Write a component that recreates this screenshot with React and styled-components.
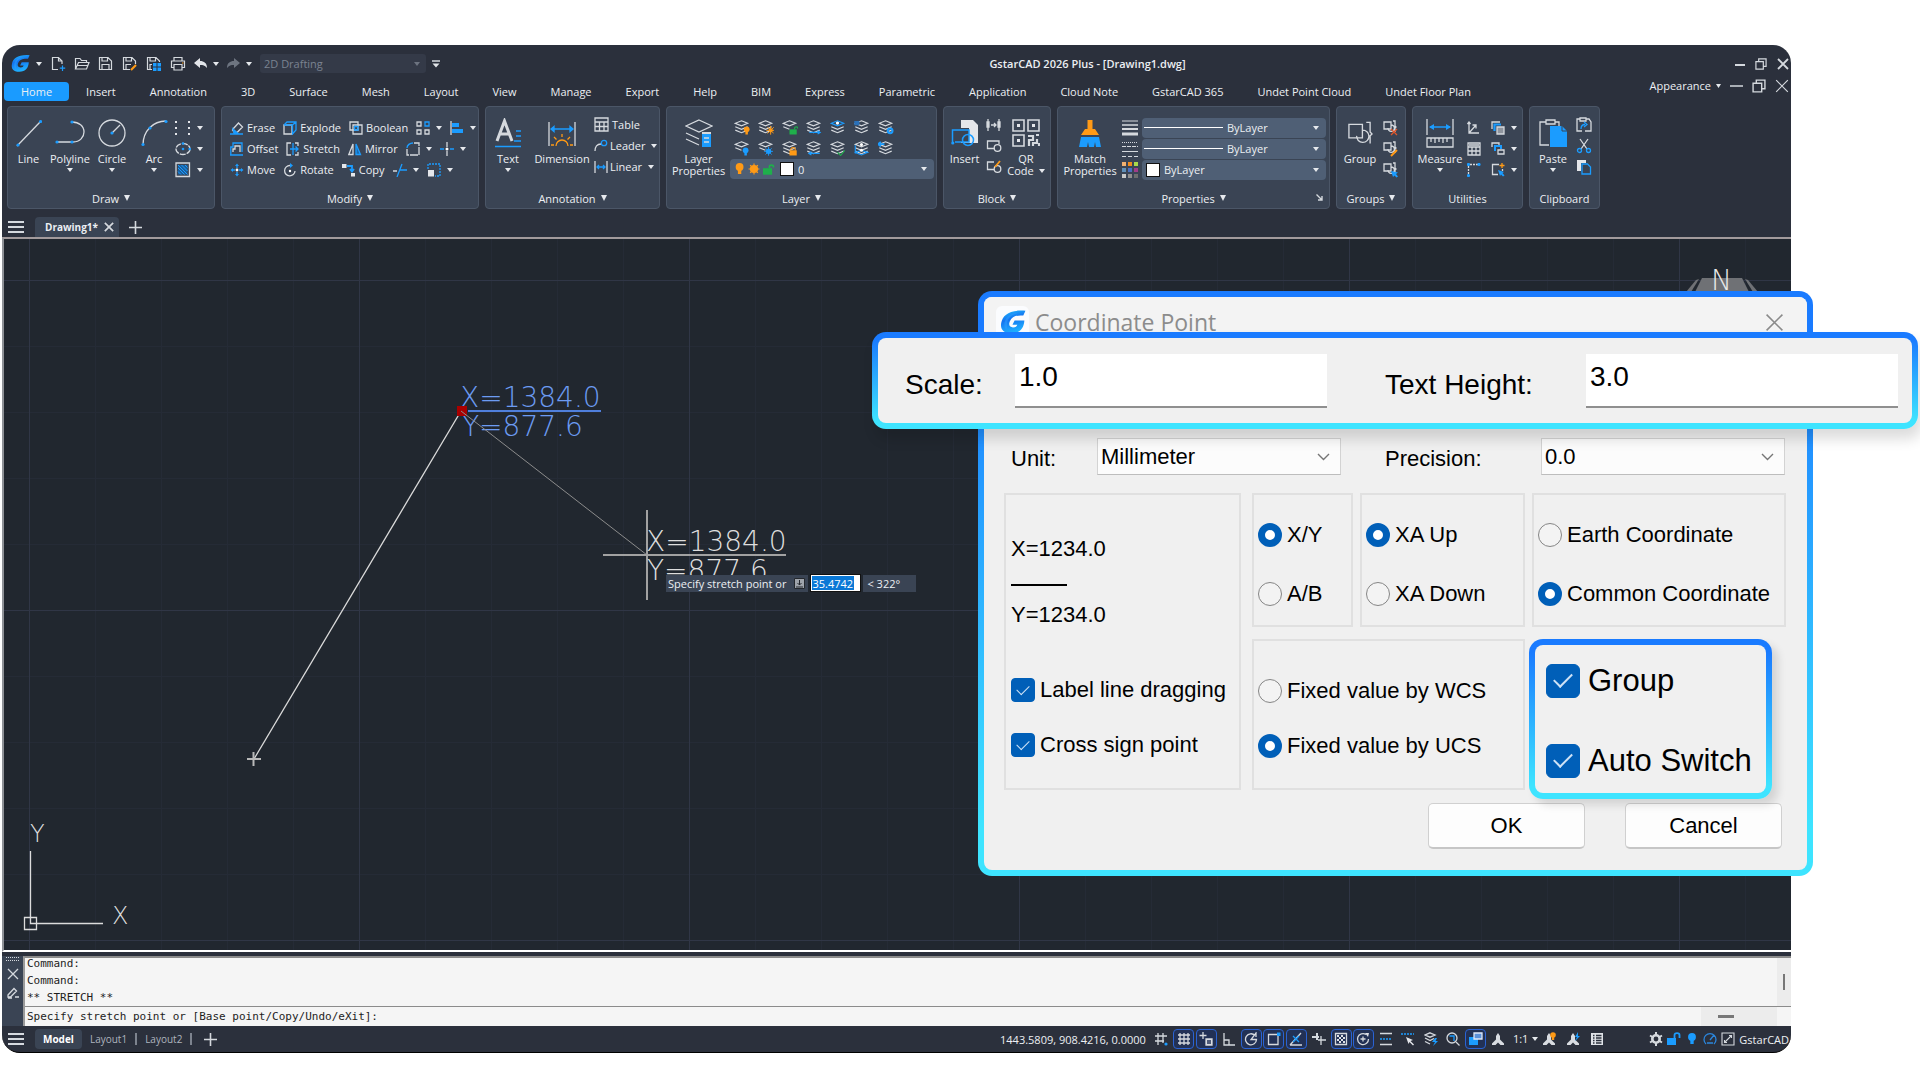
import React, { useState } from "react";
import styled, { createGlobalStyle } from "styled-components";

const Colours = {
  chrome: "#2b303c",
  panel: "#3a4454",
  panel_border: "#4b5667",
  field: "#4f5f75",
  canvas: "#21272f",
  text: "#eceff3",
  line: "#d5d9de",
  blue: "#1b9cff",
  orange: "#ff9a16",
  green: "#1faf4b",
  accent: "#005fb8"
};

const uiFont = `"Open Sans", "Noto Sans", sans-serif`;
const dialogFont = `"Liberation Sans", Arial, sans-serif`;
const cadFont = `"DejaVu Sans Light", "DejaVu Sans", sans-serif`;

const GlobalStyle = createGlobalStyle`
  * {
    box-sizing: border-box;
  }
  body {
    margin: 0;
    background: #fff;
    overflow: hidden;
  }
  button, input, select {
    font: inherit;
    color: inherit;
    margin: 0;
  }
`;

/* ---------- shell ---------- */

const Page = styled.div`
  position: relative;
  height: 100vh;
  padding: 45px 129px 27px 2px;
  font-family: ${uiFont};
  font-size: 11px;
  color: ${Colours.text};
`;

const AppWindow = styled.main`
  display: flex;
  flex-direction: column;
  height: 100%;
  overflow: hidden;
  background: ${Colours.chrome};
  border-radius: 18px;
  border-bottom: 1px solid #000;
`;

const Row = styled.div`
  display: flex;
  align-items: center;
  gap: ${props => props.$gap || 0}px;
`;

const TitleBar = styled.header`
  display: flex;
  align-items: center;
  justify-content: space-between;
  flex: none;
  height: 37px;
  padding: 0 2px 0 9px;
`;

const AppTitle = styled.h1`
  margin: 0;
  font-size: 11px;
  font-weight: 600;
`;

const PlainButton = styled.button`
  display: flex;
  align-items: center;
  gap: ${props => props.$gap || 0}px;
  padding: 0;
  border: 0;
  background: none;
  line-height: 12px;
  white-space: nowrap;
`;

const WorkspaceBox = styled.div`
  display: flex;
  align-items: center;
  width: 166px;
  height: 19px;
  padding: 0 6px 0 4px;
  border-radius: 3px;
  background: #343a48;
  color: #7b8391;
`;

const BareSelect = styled.select`
  flex: 1;
  min-width: 0;
  padding: 0;
  border: 0;
  background: transparent;
  appearance: none;
  outline: none;
`;

const TabRow = styled.nav`
  display: flex;
  align-items: flex-start;
  justify-content: space-between;
  flex: none;
  height: 24px;
  padding: 0 2px 0 2px;
`;

const RibbonTab = styled.button`
  height: 19px;
  padding: 0 17px;
  border: 0;
  border-radius: 4px;
  background: ${props => (props.$active ? "#1a9bff" : "none")};
  line-height: 18px;
  white-space: nowrap;
`;

const AppearanceBar = styled.div`
  display: flex;
  align-items: center;
  gap: 9px;
  height: 18px;
  margin-top: -5px;
`;

const Ribbon = styled.section`
  display: flex;
  flex: none;
  gap: 6px;
  padding: 0 5px;
`;

const Panel = styled.div`
  display: flex;
  flex-direction: column;
  justify-content: space-between;
  width: ${props => props.$width}px;
  height: 103px;
  padding: 10px 0 1px;
  border: 1px solid ${Colours.panel_border};
  border-radius: 4px;
  background: ${Colours.panel};
`;

const PanelBody = styled.div`
  display: flex;
  align-items: flex-start;
  gap: ${props => props.$gap || 0}px;
  padding-left: ${props => props.$inset || 0}px;
`;

const PanelFooter = styled.div`
  display: flex;
  align-items: center;
  justify-content: center;
  gap: 5px;
  height: 18px;
  position: relative;
`;

const Launcher = styled.span`
  position: absolute;
  right: 6px;
  top: 5px;
  display: flex;
`;

const BigToolButton = styled.button`
  display: flex;
  flex-direction: column;
  align-items: center;
  width: ${props => props.$width}px;
  padding: 0;
  border: 0;
  background: none;
  line-height: 12px;
`;

const BigIcon = styled.span`
  display: flex;
  align-items: center;
  justify-content: center;
  height: 32px;
  margin-bottom: 4px;
`;

const CaretSlot = styled.span`
  display: flex;
  margin-top: 3px;
`;

const Stack = styled.div`
  display: flex;
  flex-direction: column;
  margin-top: ${props => (props.$raised ? "-3px" : "0")};
`;

const StackRow = styled.div`
  display: flex;
  align-items: center;
  gap: ${props => props.$gap || 0}px;
  height: 21px;
`;

const LayerIcons = styled.div`
  display: grid;
  grid-template-columns: repeat(7, 24px);
  grid-auto-rows: 21px;
  align-items: center;
  justify-items: center;
`;

const FieldBox = styled.div`
  display: flex;
  align-items: center;
  gap: 4px;
  width: ${props => props.$width}px;
  height: 20px;
  padding: 0 7px 0 ${props => props.$inset || 2}px;
  border-radius: 4px;
  background: ${Colours.field};
`;

const Swatch = styled.span`
  width: 14px;
  height: 14px;
  border: 1px solid #111;
  background: #fff;
`;

const SampleLine = styled.span`
  width: 79px;
  height: 1px;
  background: #fff;
`;

const DocTabs = styled.div`
  display: flex;
  align-items: flex-end;
  flex: none;
  height: 28px;
  padding-left: 6px;
`;

const TabIconButton = styled(PlainButton)`
  justify-content: center;
  height: 20px;
`;

const DocTab = styled.div`
  display: flex;
  align-items: center;
  gap: 6px;
  height: 20px;
  margin: 0 10px 0 11px;
  padding: 0 5px 0 10px;
  border-radius: 4px 4px 0 0;
  background: ${Colours.panel};
  font-size: 10px;
  font-weight: 700;
  line-height: 20px;
`;

/* ---------- canvas ---------- */

const Canvas = styled.section`
  position: relative;
  flex: 1;
  min-height: 0;
  overflow: hidden;
  background: ${Colours.canvas};
  border-top: 2px solid #a29a9c;
  border-left: 2px solid #8f9297;
  border-bottom: 2px solid #fff;
`;

const Drawing = styled.svg`
  position: absolute;
  left: 0;
  top: 0;
  width: 100%;
  height: 100%;
  text {
    font-family: ${cadFont};
    font-weight: 200;
  }
`;

const DynamicPrompt = styled.div`
  position: absolute;
  left: 662px;
  top: 335px;
  display: flex;
  align-items: center;
  gap: 2px;
`;

const PromptBox = styled.label`
  display: flex;
  align-items: center;
  gap: 8px;
  height: 17px;
  padding: 0 3px 0 2px;
  background: ${Colours.panel};
`;

const PromptInput = styled.input`
  width: 51px;
  height: 18px;
  padding: 0 1px;
  border: 1px solid #111;
  background: linear-gradient(#0a78d6, #0a78d6) no-repeat 1px 1px / 42px 14px #fff;
  color: #fff;
`;

const PromptAngle = styled.output`
  width: 53px;
  height: 17px;
  padding-left: 4px;
  background: ${Colours.panel};
  line-height: 17px;
`;

/* ---------- command line ---------- */

const CommandArea = styled.section`
  display: flex;
  flex: none;
  padding-top: 4px;
`;

const CommandHandle = styled.div`
  display: flex;
  flex-direction: column;
  align-items: center;
  gap: 7px;
  width: 21px;
  padding-top: 1px;
  background: ${Colours.panel};
`;

const CommandBody = styled.div`
  flex: 1;
  border-left: 2px solid #9a9a9a;
  border-top: 2px solid #8b8b8b;
  background: #f5f5f5;
  color: #1d1d1d;
  font-family: "DejaVu Sans Mono", "Liberation Mono", monospace;
`;

const CommandHistory = styled.div`
  display: flex;
  justify-content: space-between;
  height: 49px;
  border-bottom: 1px solid #8b8b8b;
`;

const HistoryLines = styled.pre`
  margin: -3px 0 0 2px;
  font: inherit;
  line-height: 17px;
`;

const ScrollTrack = styled.div`
  display: flex;
  align-items: center;
  justify-content: center;
  width: 14px;
  background: #ececec;
`;

const HorizontalTrack = styled(ScrollTrack)`
  justify-content: flex-start;
  width: 76px;
  height: 19px;
  margin-right: 14px;
  padding-left: 17px;
`;

const ScrollThumb = styled.span`
  width: ${props => (props.$wide ? 16 : 2)}px;
  height: ${props => (props.$wide ? 3 : 16)}px;
  background: #777;
`;

const CommandPrompt = styled.label`
  display: flex;
  align-items: center;
  height: 19px;
  padding-left: 2px;
`;

const CommandInput = styled.input`
  flex: 1;
  border: 0;
  background: transparent;
  outline: none;
`;

/* ---------- status bar ---------- */

const StatusBar = styled.footer`
  display: flex;
  align-items: center;
  justify-content: space-between;
  flex: none;
  height: 26px;
  padding: 0 2px 0 6px;
`;

const LayoutTab = styled.button`
  height: 20px;
  padding: 0 8px;
  border: 0;
  border-radius: 4px;
  background: ${props => (props.$active ? Colours.panel : "none")};
  color: ${props => (props.$active ? "#fff" : "#aeb4be")};
  font-size: 10px;
  font-weight: ${props => (props.$active ? 700 : 400)};
  line-height: 18px;
`;

const Divider = styled.span`
  width: 2px;
  height: 12px;
  background: #7d838e;
`;

const StatusRight = styled.div`
  display: flex;
  align-items: center;
`;

const Toggles = styled.div`
  display: flex;
  align-items: center;
  justify-content: space-between;
  width: 358px;
  margin: 0 4px 0 5px;
`;

const Toggle = styled.button`
  display: flex;
  align-items: center;
  justify-content: center;
  width: 21px;
  height: 20px;
  padding: 0;
  border: 1px solid ${props => (props.$on ? "#2a63d4" : "transparent")};
  border-radius: 4px;
  background: ${props => (props.$on ? "#223155" : "none")};
`;

const StatusGroup = styled.div`
  display: flex;
  align-items: center;
  gap: ${props => props.$gap || 3}px;
  margin-left: ${props => props.$space || 0}px;
`;

/* ---------- dialog ---------- */

const GlowFrame = styled.div`
  border: 6px solid transparent;
  border-radius: 14px;
  background: linear-gradient(#f0f0f0, #f0f0f0) padding-box,
    linear-gradient(#1a7bff 8%, #3ee4ff 92%) border-box;
`;

const Dialog = styled(GlowFrame).attrs({ as: "form" })`
  position: absolute;
  left: 978px;
  top: 291px;
  width: 835px;
  padding-bottom: 21px;
  color: #000;
  font-family: ${dialogFont};
  font-size: 22px;
`;

const DialogTitle = styled.div`
  display: flex;
  align-items: center;
  gap: 6px;
  height: 50px;
  padding: 0 23px 0 12px;
  border-radius: 8px 8px 0 0;
  background: #f3f3f3;
  color: #8c8c8c;
  font-family: ${uiFont};
  font-size: 23px;
`;

const LogoTile = styled.span`
  display: flex;
  align-items: center;
  justify-content: center;
  width: 33px;
  height: 33px;
  border-radius: 6px;
  background: #fbfcfe;
`;

const CloseButton = styled(PlainButton)`
  margin-left: auto;
`;

const DialogBody = styled.div`
  padding: 91px 21px 0 20px;
`;

const FieldGrid = styled.div`
  display: grid;
  grid-template-columns: 86px 244px 200px 244px;
  align-items: center;
  padding-left: 7px;
  margin-bottom: 18px;
`;

const FieldLabel = styled.label`
  padding-left: ${props => (props.$indent ? 44 : 0)}px;
  padding-top: 4px;
`;

const ComboBox = styled.div`
  display: flex;
  align-items: center;
  height: 37px;
  padding: 0 10px 0 3px;
  border: 1px solid #d3d3d3;
  border-bottom-color: #bdbdbd;
  background: #fcfcfc;
`;

const OptionGrid = styled.div`
  display: flex;
  gap: 11px;
`;

const OptionColumn = styled.div`
  display: flex;
  flex-direction: column;
  flex: 1;
  gap: 12px;
`;

const OptionRow = styled.div`
  position: relative;
  display: flex;
  gap: 7px;
`;

const GroupBox = styled.fieldset`
  display: flex;
  flex-direction: column;
  gap: ${props => props.$gap || 35}px;
  width: ${props => props.$width}px;
  min-width: 0;
  height: ${props => props.$height}px;
  margin: 0;
  padding: ${props => props.$top || 28}px 0 0 ${props => props.$inset || 4}px;
  border: 2px solid #e0e0e0;
`;

const Option = styled.label`
  display: flex;
  align-items: center;
  gap: ${props => (props.$large ? 8 : 5)}px;
  line-height: 24px;
  white-space: nowrap;
  font-size: ${props => (props.$large ? 31 : 22)}px;
`;

const Radio = styled.input.attrs({ type: "radio" })`
  flex: none;
  width: 24px;
  height: 24px;
  border: 1px solid #858585;
  border-radius: 50%;
  background: #f3f3f3;
  appearance: none;
  &:checked {
    border: 7px solid ${Colours.accent};
    background: #fff;
  }
`;

const CheckBox = styled.input.attrs({ type: "checkbox" })`
  display: flex;
  align-items: center;
  justify-content: center;
  flex: none;
  width: ${props => (props.$large ? 34 : 24)}px;
  height: ${props => (props.$large ? 34 : 24)}px;
  border: 1px solid #858585;
  border-radius: ${props => (props.$large ? 6 : 4)}px;
  background: #fff;
  appearance: none;
  &:checked {
    border-color: ${Colours.accent};
    background: ${Colours.accent};
  }
  &:checked::after {
    content: "";
    width: ${props => (props.$large ? 16 : 11)}px;
    height: ${props => (props.$large ? 8 : 6)}px;
    margin-bottom: ${props => (props.$large ? 6 : 4)}px;
    border: solid #cfe3f6;
    border-width: 0 0 ${props => (props.$large ? 2 : 1)}px ${props => (props.$large ? 2 : 1)}px;
    transform: rotate(-45deg);
  }
`;

const Preview = styled.div`
  display: flex;
  flex-direction: column;
  margin-bottom: 20px;
  line-height: 24px;
`;

const PreviewRule = styled.span`
  width: 56px;
  height: 2px;
  margin: 23px 0 17px;
  background: #000;
`;

const SwitchCallout = styled(GlowFrame)`
  position: absolute;
  right: 14px;
  top: 0;
  display: flex;
  flex-direction: column;
  gap: 46px;
  width: 243px;
  height: 160px;
  padding: 19px 0 0 11px;
  box-shadow: 6px 6px 8px rgba(0, 0, 0, 0.12);
  label {
    height: 34px;
  }
`;

const ScaleCallout = styled(GlowFrame)`
  position: absolute;
  left: -112px;
  top: 35px;
  display: grid;
  grid-template-columns: 110px 312px 259px 312px;
  align-items: center;
  height: 97px;
  width: 1046px;
  padding-left: 27px;
  box-shadow: 4px 10px 14px rgba(0, 0, 0, 0.14);
  font-size: 28px;
`;

const ScaleLabel = styled.label`
  padding-left: ${props => (props.$indent ? 58 : 0)}px;
  padding-top: 9px;
`;

const ScaleInput = styled.input`
  height: 54px;
  min-width: 0;
  padding: 0 4px 6px;
  border: 0;
  border-bottom: 2px solid #8f8f8f;
  background: #fff;
  outline: none;
`;

const DialogActions = styled.div`
  display: flex;
  justify-content: flex-end;
  gap: 40px;
  margin-top: 13px;
  padding-right: 4px;
`;

const DialogButton = styled.button`
  width: 157px;
  height: 46px;
  border: 1px solid #d0d0d0;
  border-bottom: 2px solid #c6c6c6;
  border-radius: 5px;
  background: #fdfdfd;
`;

/* ---------- icons ---------- */

const Glyph = ({ w = 16, h = 16, vw = w, vh = h, children, stroke = Colours.line, sw = 1.3 }) => (
  <svg width={w} height={h} viewBox={`0 0 ${vw} ${vh}`} fill="none" stroke={stroke} strokeWidth={sw} aria-hidden="true">
    {children}
  </svg>
);

const Caret = ({ size = 6, color = "#e6e9ed", tall }) => (
  <svg width={size} height={tall ? 6 : 4} viewBox="0 0 6 4" preserveAspectRatio="none" aria-hidden="true">
    <path d="M0 0H6L3 4Z" fill={color} />
  </svg>
);

const Dot = ({ x, y, r = 1.6 }) => <circle cx={x} cy={y} r={r} fill={Colours.blue} stroke="none" />;

const Logo = ({ size }) => (
  <svg width={size} height={size} viewBox="0 0 24 24" aria-hidden="true">
    <defs>
      <linearGradient id="logoFill" x1="0" y1="0" x2="0.3" y2="1">
        <stop offset="0" stopColor="#22c3ff" />
        <stop offset="0.45" stopColor="#1473f0" />
        <stop offset="1" stopColor="#1fb0ff" />
      </linearGradient>
    </defs>
    <path
      fill="url(#logoFill)"
      d="M23.500 1.500L21.500 6C16 5.500 11 6.500 9 11.500C7.500 15.500 9.500 17 12 17C14.500 17 15.500 15.800 16 14.500H11.500L13.500 10.500H22.500C22 17.500 18.500 22.500 10.500 22.500C2.500 22.500 0 18 1.200 12.500C2.500 5.500 9 0.500 23.500 1.500Z"
    />
    <path fill="#2b9dff" opacity="0.55" d="M4 15C4 8 9 3.500 17 3.500C10 5 6 9 6.500 16C7 20 4 19 4 15Z" />
  </svg>
);

const Close = ({ size, sw = 1.3, color = Colours.line }) => (
  <Glyph w={size} h={size} vw={12} vh={12} sw={sw} stroke={color}>
    <path d="M1 1L11 11M11 1L1 11" />
  </Glyph>
);

const Burger = () => (
  <Glyph w={16} h={12} sw={2}>
    <path d="M0 1H16M0 6H16M0 11H16" />
  </Glyph>
);

const Plus = () => (
  <Glyph w={13} h={13} sw={1.6}>
    <path d="M6.500 0V13M0 6.500H13" />
  </Glyph>
);

const Restore = ({ size = 13 }) => (
  <Glyph w={size} h={size} vw={13} vh={13}>
    <path d="M1 4H9V12H1ZM4 4V1H12V9H9" />
  </Glyph>
);

const Chevron = () => (
  <Glyph w={13} h={8} sw={1.4} stroke="#767676">
    <path d="M1 1L6.500 6.500L12 1" />
  </Glyph>
);

const disk = "M1.500 1.500H10L13.500 5V13.500H1.500ZM4 1.500V5H9.500V1.500M4 13.500V8.500H11V13.500";

const quickIcons = {
  New: (
    <>
      <path d="M8 13.500H2.500V1.500H8.500L12 5V8M8.500 1.500V5H12" />
      <path d="M12.500 9.500V15M9.800 12.200H15.200" stroke={Colours.blue} />
    </>
  ),
  Open: <path d="M1.500 13V2.500H6L7.500 4.500H12.500V6.500M1.500 13L4.500 6.500H15L12.500 13ZM3.500 9.500H13.500" />,
  Save: <path d={disk} />,
  "Save as": (
    <>
      <path d="M8 13.500H1.500V1.500H10L13.500 5V8M4 1.500V5H9.500V1.500M4 13.500V8.500H9" />
      <path d="M9 14L14 9" stroke={Colours.orange} strokeWidth="2.200" />
    </>
  ),
  "Save all": (
    <>
      <path d="M6 13.500H1.500V1.500H10L13.500 5V6M4 1.500V5H9.500V1.500M4 13.500V8.500H6" />
      <path d="M7 7H10.500V10.500H7ZM11.500 7H15V10.500H11.500ZM7 11.500H10.500V15H7ZM11.500 11.500H15V15H11.500Z" fill={Colours.blue} stroke="none" />
    </>
  ),
  Print: (
    <>
      <path d="M4 5V1.500H12V5M4 11.500H1.500V5H14.500V11.500H12M4 8.500H12V14H4Z" />
      <path d="M12 7H13.500" stroke={Colours.orange} />
    </>
  )
};

const Sheets = ({ top = Colours.line, short }) => (
  <>
    <path d="M7 0.800L13 3.200L7 5.600L1 3.200Z" stroke={top} />
    <path d={short ? "M1 6.500L7 9" : "M1 6.500L7 9L13 6.500M1 9.800L7 12.300L13 9.800"} />
  </>
);

const Bulb = ({ color, x = 0, y = 0 }) => (
  <g transform={`translate(${x} ${y})`} fill={color} stroke="none">
    <circle cx="3" cy="3" r="2.800" />
    <path d="M1.800 5H4.200V8H1.800Z" />
  </g>
);

const Sun = ({ color, x, y, r = 2 }) => (
  <g transform={`translate(${x} ${y})`} stroke={color}>
    <circle r={r} fill={color} />
    <path d="M0 -4.200V4.200M-4.200 0H4.200M-3 -3L3 3M3 -3L-3 3" strokeWidth="0.900" />
  </g>
);

const Lock = ({ color, x, y, open }) => (
  <g transform={`translate(${x} ${y})`} stroke={color}>
    <rect y="3" width="7" height="5" fill={color} stroke="none" />
    <path d={open ? "M5 3V1.500C5 0.300 8 0.300 8 1.500V2.500" : "M1.500 3V1.500C1.500 0 5.500 0 5.500 1.500V3"} />
  </g>
);

const layerTools = [
  ["Turn on", <><Sheets /><Bulb color={Colours.orange} x={9} y={6} /></>],
  ["Thaw", <><Sheets /><Sun color={Colours.orange} x={12} y={10} r={1.500} /></>],
  ["Unlock", <><Sheets short /><Lock color={Colours.green} x={7} y={6} open /></>],
  ["Move to layer", <><Sheets /><path d="M3 12H13M11 10.500L13.500 12L11 13.500" stroke={Colours.blue} /></>],
  ["Isolate", <><Sheets top={Colours.blue} /><circle cx="7" cy="3" r="1.600" fill="#fff" stroke="none" /></>],
  ["Match", <><Sheets /><path d="M0 1H5V5H0Z" fill="#2a70b8" stroke="none" /></>],
  ["States", <><Sheets /><circle cx="11.500" cy="10.500" r="2.300" stroke={Colours.blue} strokeWidth="2" /></>],
  ["Turn off", <><Sheets short /><Bulb color={Colours.blue} x={8} y={6} /></>],
  ["Freeze", <><Sheets short /><Sun color={Colours.blue} x={10} y={10} /></>],
  ["Lock", <><Sheets /><Lock color={Colours.orange} x={7} y={6} /></>],
  ["Copy to layer", <><Sheets /><path d="M3 12H13M5 10.500L2.500 12L5 13.500" stroke={Colours.blue} /></>],
  ["Make current", <><Sheets /><path d="M7 11L10 14L14 9" stroke={Colours.green} /></>],
  ["Walk", <><Sheets /><path d="M1 4V12M1 11L7 13.500L13 11L7 9Z" stroke={Colours.blue} /><circle cx="7" cy="3.500" r="1.500" fill="#fff" stroke="none" /><circle cx="7" cy="9" r="1.500" fill="#fff" stroke="none" /></>],
  ["Previous", <><Sheets /><path d="M0 3H6M2.500 0.800L0 3L2.500 5.200" stroke={Colours.blue} strokeWidth="1.800" /></>]
];

const modifyRows = [
  [
    ["Erase", <><path d="M3 8L8.500 2L12.500 6L7 11.500H4.500L2.500 9Z" /><path d="M0 13H13M3 8L7 11.500H4Z" stroke={Colours.blue} fill={Colours.blue} /></>],
    ["Explode", <><path d="M1 4H9V13H1Z" /><path d="M1 4L4 1H13V9L9.500 13V4H1M9.500 4L13 1" stroke={Colours.blue} /></>],
    ["Boolean", <><path d="M1 1H9V9H1ZM4 4H13V13H4Z" /><path d="M5.500 5.500H9V9H5.500Z" stroke={Colours.blue} /></>],
    [null, <><path d="M1 1H5V5H1ZM1 9H5V13H1ZM9 9H13V13H9Z" /><path d="M9 1H13V5H9Z" stroke={Colours.blue} /></>, "Array"],
    [null, <><path d="M1 0V14" /><path d="M2 2H9V6H2ZM2 8H13V12H2Z" fill={Colours.blue} stroke="none" /></>, "Align"]
  ],
  [
    ["Offset", <><path d="M3 10V7H5V4H10V7H10V10" /><path d="M0.800 13V5H3V1H12V10M0 13H13" stroke={Colours.blue} /></>],
    ["Stretch", <><path d="M5 1H1V13H5M9 1H12V4M9 13H12V10" /><path d="M7 1V13M4 7H12M9.500 4.500L12 7L9.500 9.500" stroke={Colours.blue} /></>],
    ["Mirror", <><path d="M5 2V12.500H0.800Z" /><path d="M8 2V12.500H12.500Z" stroke={Colours.blue} fill="#1b6bb0" /></>],
    [null, <><path d="M1 6C1 3 4 1 7 1" stroke={Colours.blue} /><path d="M8 1H13V13H1V7" strokeDasharray="8 1" /></>, "Fillet"],
    [null, <><path d="M7 0V5M7 9V14" /><path d="M0 7H4M10 7H14" stroke={Colours.blue} /><circle cx="7" cy="7" r="1.500" fill="#fff" stroke="none" /></>, "Break"]
  ],
  [
    ["Move", <><path d="M5 3L7 0.500L9 3ZM5 11L7 13.500L9 11ZM3 5L0.500 7L3 9ZM11 5L13.500 7L11 9Z" fill={Colours.blue} stroke="none" /><path d="M7 2V5M7 9V12M2 7H5M9 7H12" stroke={Colours.blue} /><circle cx="7" cy="7" r="1.400" fill="#fff" stroke="none" /></>],
    ["Rotate", <><path d="M7 2.500A5.200 5.200 0 1 0 12 8" /><path d="M7 0L10 2.500L7 5Z" fill={Colours.blue} stroke="none" /><circle cx="7" cy="8" r="1.200" fill="#fff" stroke="none" /></>],
    ["Copy", <><path d="M0 1H4.500V5H0ZM9 10H13V13.500H9Z" fill="#e4e6ea" stroke="none" /><path d="M5 3H10V8M8 6L10 8.500L12 6" stroke={Colours.blue} strokeWidth="1.800" /></>],
    [null, <><path d="M0 8H4" /><path d="M4 14L9 1M7 7H14" stroke={Colours.blue} /></>, "Trim"],
    [null, <><path d="M1 6V1H13V13H8" stroke={Colours.blue} strokeDasharray="2 1" /><path d="M1 7H7V13.500H1Z" fill="#e4e6ea" stroke="none" /></>, "Scale"]
  ]
];

const GroupShape = () => <path d="M1 2H8V9H1ZM5 8A3.200 3.200 0 1 0 8 5M10 1H12V6L13 7L12 8V12" />;

const annotative = "M7 1L9 4V7.500L13 11.500V13H9.500L7 10.500L4.500 13H1V11.500L5 7.500V4Z";

const toggles = [
  ["Snap", false, <><path d="M4 1V13M9 1V11M1 4H13M1 9H10" /><circle cx="12" cy="12" r="1.600" fill={Colours.blue} stroke="none" /></>],
  ["Grid", true, <path d="M3 1V13M7 1V13M11 1V13M1 3H13M1 7H13M1 11H13" />],
  ["Dynamic input", true, <><path d="M4 0V7M0.500 3.500H7.500" /><path d="M7 7H13V13H7Z" fill="#dfe2e7" /><path d="M8 9H12M8 11H12" stroke="#223155" /></>],
  ["Ortho", false, <path d="M2 1V13H13M2 8H7V13" />],
  ["Polar", true, <><path d="M11 3.500A5.500 5.500 0 1 0 12.500 7.500H7L12 1V5" /></>],
  ["Object snap", true, <><path d="M1.500 2.500H11V12.500H1.500Z" /><path d="M10 0.500H13.500V4H10Z" fill={Colours.blue} stroke="none" /></>],
  ["Tracking", true, <><path d="M1 13L12 1M1 13H13" /><path d="M4 4L10 10M4 10L10 4" stroke={Colours.blue} /></>],
  ["Dynamic UCS", false, <><path d="M5 1V8M0 5H7" strokeWidth="2" /><path d="M9 4V13M6 8H14" /></>],
  ["Transparency", true, <><path d="M1.500 1.500H12.500V12.500H1.500Z" /><path d="M3 3H5V5H3ZM7 3H9V5H7ZM5 5H7V7H5ZM9 5H11V7H9ZM3 7H5V9H3ZM7 7H9V9H7ZM5 9H7V11H5ZM9 9H11V11H9Z" fill="#dfe2e7" stroke="none" /></>],
  ["Cycling", true, <><path d="M10 2.500A5.500 5.500 0 1 0 12.500 7M7 4.500V9.500M4.500 7H9.500" /><path d="M9 1L13 1L12 5Z" fill="#dfe2e7" stroke="none" /></>],
  ["Line weight", false, <><path d="M1 1.500H13M1 12.500H13" strokeWidth="1.500" /><path d="M1 7H13" stroke={Colours.blue} strokeDasharray="2 1" /></>],
  ["Selection", false, <><path d="M0 2H13" stroke={Colours.blue} strokeDasharray="2 1" /><path d="M5 5L12 8L9.500 9L13 12.500L12 13.500L8.500 10L7.500 12Z" fill="#e4e6ea" stroke="none" /></>],
  ["Layer state", false, <><path d="M6 0.800L11 3L6 5.200L1 3ZM1 6L6 8.500L10 6.500M1 9.500L6 12" /><path d="M11 6L8 10H11L9 14L14 9H11.500L13 6Z" fill={Colours.blue} stroke="none" /></>],
  ["Zoom", false, <><circle cx="6" cy="6" r="5" /><path d="M10 10L13.500 13.500" /><path d="M3.500 4H8V9" stroke={Colours.blue} /></>],
  ["Clean", true, <><path d="M0 5H9V13H0Z" fill={Colours.blue} stroke="none" /><path d="M5 1H13V7H5Z" fill="#5c91d8" stroke="#dfe8f8" /></>],
  ["Annotation", false, <path d={annotative} fill="#d9dce1" stroke="none" />]
];

const IconTool = ({ label, gap = 6, caret, children }) => (
  <PlainButton type="button" aria-label={label} title={label} $gap={gap}>
    {children}
    {caret && <Caret />}
  </PlainButton>
);

const BigTool = ({ width, icon, caret, lines, inlineCaret }) => (
  <BigToolButton type="button" $width={width}>
    <BigIcon>{icon}</BigIcon>
    <span>{lines[0]}</span>
    {lines[1] && (
      <Row as="span" $gap={5}>
        {lines[1]}
        {inlineCaret && <Caret />}
      </Row>
    )}
    {caret && (
      <CaretSlot>
        <Caret />
      </CaretSlot>
    )}
  </BigToolButton>
);

const Footer = ({ children, caret = true, launcher }) => (
  <PanelFooter>
    {children}
    {caret && <Caret tall />}
    {launcher && (
      <Launcher>
        <Glyph w={7} h={7} sw={1.4}>
          <path d="M0.500 0.500L6 6M6 2V6H2" />
        </Glyph>
      </Launcher>
    )}
  </PanelFooter>
);

/* ---------- sections ---------- */

const tabs = [
  "Home", "Insert", "Annotation", "3D", "Surface", "Mesh", "Layout", "View", "Manage", "Export",
  "Help", "BIM", "Express", "Parametric", "Application", "Cloud Note", "GstarCAD 365",
  "Undet Point Cloud", "Undet Floor Plan"
];

const Header = () => {
  const [active, setActive] = useState("Home");
  return (
    <>
      <TitleBar>
        <Row $gap={8}>
          <PlainButton type="button" aria-label="Application menu" $gap={6}>
            <Logo size={19} />
            <Caret />
          </PlainButton>
          <Row $gap={8}>
            {Object.keys(quickIcons).map(name => (
              <IconTool key={name} label={name}>
                <Glyph w={16} h={16} sw={1.2}>{quickIcons[name]}</Glyph>
              </IconTool>
            ))}
            <IconTool label="Undo" caret>
              <Glyph w={13} h={11} stroke="none">
                <path d="M6 0V3C10 3 13 5 13 10C11 7.500 9 7 6 7V10L0 5Z" fill="#e2e5e9" />
              </Glyph>
            </IconTool>
            <IconTool label="Redo" caret>
              <Glyph w={13} h={11} stroke="none">
                <path d="M7 0V3C3 3 0 5 0 10C2 7.500 4 7 7 7V10L13 5Z" fill="#6d7480" />
              </Glyph>
            </IconTool>
          </Row>
          <Row $gap={6}>
            <WorkspaceBox>
              <BareSelect aria-label="Workspace">
                <option>2D Drafting</option>
              </BareSelect>
              <Caret color="#6d7480" />
            </WorkspaceBox>
            <IconTool label="Customize">
              <Glyph w={8} h={8} sw={1.4}>
                <path d="M0 1H8" />
                <path d="M0.500 3.500H7.500L4 7.500Z" fill="#e2e5e9" stroke="none" />
              </Glyph>
            </IconTool>
          </Row>
        </Row>
        <AppTitle>GstarCAD 2026 Plus - [Drawing1.dwg]</AppTitle>
        <Row $gap={10}>
          <IconTool label="Minimize">
            <Glyph w={10} h={8} sw={2}><path d="M0 5H10" /></Glyph>
          </IconTool>
          <IconTool label="Restore"><Restore size={12} /></IconTool>
          <IconTool label="Close"><Close size={12} sw={1.8} /></IconTool>
        </Row>
      </TitleBar>
      <TabRow>
        <Row>
          {tabs.map(tab => (
            <RibbonTab key={tab} type="button" $active={tab === active} onClick={() => setActive(tab)}>
              {tab}
            </RibbonTab>
          ))}
        </Row>
        <AppearanceBar>
          <PlainButton type="button" $gap={5}>
            Appearance
            <Caret size={5} />
          </PlainButton>
          <IconTool label="Minimize drawing">
            <Glyph w={13} h={8}><path d="M0 4H13" /></Glyph>
          </IconTool>
          <IconTool label="Restore drawing"><Restore size={14} /></IconTool>
          <IconTool label="Close drawing"><Close size={14} sw={1} /></IconTool>
        </AppearanceBar>
      </TabRow>
    </>
  );
};

const DrawPanel = () => (
  <Panel $width={208}>
    <PanelBody>
      <BigTool width={41} lines={["Line"]} icon={<Glyph w={26} h={28}><path d="M1 27L25 2" /><Dot x={2} y={26} /><Dot x={24.500} y={2.500} /></Glyph>} />
      <BigTool width={42} caret lines={["Polyline"]} icon={<Glyph w={30} h={26}><path d="M2 22H18C25 22 29 17 29 12C29 6 24 2 17 2" /><Dot x={2} y={22} /><Dot x={17} y={22} /><Dot x={17} y={2} /></Glyph>} />
      <BigTool width={42} caret lines={["Circle"]} icon={<Glyph w={28} h={28}><circle cx="14" cy="14" r="13" /><path d="M14 14L22 6" /><Dot x={14} y={14} /></Glyph>} />
      <BigTool width={42} caret lines={["Arc"]} icon={<Glyph w={27} h={28}><path d="M2 26C2 12 12 2 25 2" /><Dot x={2} y={25.500} /><Dot x={9} y={9} /><Dot x={25} y={2.500} /></Glyph>} />
      <Stack>
        <StackRow><IconTool label="Point" caret><Glyph w={16} h={16} stroke="none"><path d="M0 1H2V3H0ZM13 1H15V3H13ZM0 7H2V9H0ZM13 7H15V9H13ZM0 13H2V15H0ZM13 13H15V15H13Z" fill="#e4e6ea" /></Glyph></IconTool></StackRow>
        <StackRow><IconTool label="Ellipse" caret><Glyph w={16} h={16}><ellipse cx="8" cy="8" rx="7" ry="5.500" strokeDasharray="6 1" /><Dot x={8} y={8} r={1.300} /><Dot x={8} y={2.500} r={1.300} /><Dot x={14.700} y={8} r={1.300} /></Glyph></IconTool></StackRow>
        <StackRow><IconTool label="Hatch" caret><Glyph w={16} h={16}><path d="M1 1H14.500V14.500H1Z" /><path d="M3 3H12.500V12.500H3Z" fill="#1a5f9e" stroke="none" /><path d="M3 6L9.500 12.500M3 3L12.500 12.500M6.500 3L12.500 9M10 3L12.500 5.500M3 9.500L6 12.500" stroke={Colours.blue} strokeWidth="1" /></Glyph></IconTool></StackRow>
      </Stack>
    </PanelBody>
    <Footer>Draw</Footer>
  </Panel>
);

const ModifyPanel = () => (
  <Panel $width={258}>
    <PanelBody $inset={8}>
      <Stack>
        {modifyRows.map((row, i) => (
          <StackRow key={i} $gap={8}>
            {row.map(([text, icon, label]) =>
              text ? (
                <PlainButton key={text} type="button" $gap={3}>
                  <Glyph w={14} h={14}>{icon}</Glyph>
                  {text}
                </PlainButton>
              ) : (
                <IconTool key={label} label={label} caret>
                  <Glyph w={14} h={14}>{icon}</Glyph>
                </IconTool>
              )
            )}
          </StackRow>
        ))}
      </Stack>
    </PanelBody>
    <Footer>Modify</Footer>
  </Panel>
);

const AnnotationPanel = () => (
  <Panel $width={175}>
    <PanelBody $gap={6}>
      <BigTool
        width={44}
        caret
        lines={["Text"]}
        icon={
          <Glyph w={28} h={30}>
            <path d="M3 23L10.500 3L18 23M6 16H15" strokeWidth="3" />
            <path d="M22 13H27M22 18H27M20 23H27M1 28.500H27" stroke={Colours.blue} />
          </Glyph>
        }
      />
      <BigTool
        width={52}
        lines={["Dimension"]}
        icon={
          <Glyph w={28} h={28}>
            <path d="M1 3V27M27 3V27" />
            <path d="M3 10H25M6 7.500L3 10L6 12.500ZM22 7.500L25 10L22 12.500Z" stroke={Colours.blue} fill={Colours.blue} />
            <path d="M8 27A6 6 0 0 1 20 27M3 26H6M22 26H25M6 18L8.500 20.500M22 18L19.500 20.500M14 15V18" stroke={Colours.orange} />
          </Glyph>
        }
      />
      <Stack $raised>
        <StackRow>
          <PlainButton type="button" $gap={3}>
            <Glyph w={15} h={15}><path d="M1 1H14V14H1ZM1 5H14M1 9.500H14M5.500 5V14M10 5V14" /></Glyph>
            Table
          </PlainButton>
        </StackRow>
        <StackRow $gap={6}>
          <PlainButton type="button" $gap={2}>
            <Glyph w={14} h={13}><path d="M1 12C1 8 3 5 7 5" /><circle cx="10" cy="4" r="2.700" stroke={Colours.blue} /></Glyph>
            Leader
          </PlainButton>
          <Caret />
        </StackRow>
        <StackRow $gap={6}>
          <PlainButton type="button" $gap={2}>
            <Glyph w={14} h={12}><path d="M1 0V12M13 0V12" /><path d="M3 6H11M5 4L3 6L5 8M9 4L11 6L9 8" stroke={Colours.blue} /></Glyph>
            Linear
          </PlainButton>
          <Caret />
        </StackRow>
      </Stack>
    </PanelBody>
    <Footer>Annotation</Footer>
  </Panel>
);

const LayerPanel = () => (
  <Panel $width={271}>
    <PanelBody>
      <BigTool
        width={63}
        lines={["Layer", "Properties"]}
        icon={
          <Glyph w={28} h={30}>
            <path d="M14 2L27 8L14 14L1 8ZM1 15L14 21M1 21L14 27" />
            <path d="M17 16H26V29H17Z" fill={Colours.blue} stroke="none" />
            <path d="M17 15H26" strokeWidth="2" />
            <path d="M19 20H24M19 24H24" />
          </Glyph>
        }
      />
      <Stack>
        <LayerIcons>
          {layerTools.map(([name, icon]) => (
            <IconTool key={name} label={name}>
              <Glyph w={16} h={15} vw={15} vh={14.500} sw={1.100}>{icon}</Glyph>
            </IconTool>
          ))}
        </LayerIcons>
        <FieldBox $width={204} $inset={4}>
          <Glyph w={42} h={14} stroke="none">
            <g transform="scale(1.400)"><Bulb color={Colours.orange} x={1} y={0.500} /></g>
            <g transform="translate(20 7) scale(1.300)"><Sun color={Colours.orange} x={0} y={0} r={2.500} /></g>
            <g transform="translate(29 1) scale(1.300)"><Lock color={Colours.green} x={0} y={1} open /></g>
          </Glyph>
          <Swatch />
          <BareSelect aria-label="Current layer"><option>0</option></BareSelect>
          <Caret />
        </FieldBox>
      </Stack>
    </PanelBody>
    <Footer>Layer</Footer>
  </Panel>
);

const BlockPanel = () => (
  <Panel $width={108}>
    <PanelBody $gap={1}>
      <BigTool
        width={41}
        lines={["Insert"]}
        icon={
          <Glyph w={28} h={28}>
            <path d="M10 1H22L27 6V24H10Z" fill="#e4e6ea" stroke="none" />
            <path d="M9 9H18V23H9Z" fill={Colours.panel} stroke="none" />
            <path d="M1.500 23V11H18V23H4" stroke={Colours.blue} strokeWidth="1.500" />
            <circle cx="17" cy="21" r="5.500" stroke={Colours.blue} strokeWidth="1.500" />
            <Dot x={1.800} y={24} />
          </Glyph>
        }
      />
      <Stack $raised>
        <StackRow><IconTool label="Attributes"><Glyph w={16} h={14}><path d="M2 1V13M1 4H3V9H1ZM13 1V13M12 4H14V9H12ZM5 7H10M8 5L10 7L8 9" /></Glyph></IconTool></StackRow>
        <StackRow><IconTool label="Create block"><Glyph w={16} h={14}><path d="M9 9.500H1.500V2H13V5" /><circle cx="11.500" cy="9" r="3.300" /></Glyph></IconTool></StackRow>
        <StackRow><IconTool label="Edit block"><Glyph w={16} h={14}><path d="M8 9.500H1.500V2H8" /><circle cx="11.500" cy="9" r="3.300" /><path d="M9 7L14 1" stroke={Colours.orange} strokeWidth="1.800" /></Glyph></IconTool></StackRow>
      </Stack>
      <BigTool
        width={46}
        inlineCaret
        lines={["QR", "Code"]}
        icon={
          <Glyph w={28} h={28} sw={1.600}>
            <path d="M1 1H12V12H1ZM16 1H27V12H16ZM1 16H12V27H1Z" />
            <path d="M5 5H8V8H5ZM20 5H23V8H20ZM5 20H8V23H5Z" fill="#e4e6ea" stroke="none" />
            <path d="M16 17H21V21H17V27M21 27V24H25V20M24 16H27M27 24V27" strokeWidth="2.200" />
          </Glyph>
        }
      />
    </PanelBody>
    <Footer>Block</Footer>
  </Panel>
);

const palette = ["#f0b070", "#f08a1c", "#a8d84a", "#5f8fb8", "#4a6fc0", "#a03c88", "#c8c8c8", "#8f8f8f", "#6e6e6e"];

const PropertiesPanel = () => (
  <Panel $width={273}>
    <PanelBody>
      <BigTool
        width={64}
        lines={["Match", "Properties"]}
        icon={
          <Glyph w={24} h={28} stroke="none">
            <path d="M9.500 1H14.500V10H17L21 16H3L7 10H9.500Z" fill={Colours.orange} />
            <path d="M3 18H21L23 28H18L17 23L16 28H11L10 23L9 28H1Z" fill={Colours.blue} />
          </Glyph>
        }
      />
      <Stack>
        <StackRow $gap={4}>
          <Glyph w={16} h={16}><path d="M0 1H16" strokeWidth="1" /><path d="M0 5H16" strokeWidth="1.500" /><path d="M0 9H16" strokeWidth="2" /><path d="M0 14H16" strokeWidth="3" /></Glyph>
          <FieldBox $width={184}>
            <SampleLine />
            <BareSelect aria-label="Line weight"><option>ByLayer</option></BareSelect>
            <Caret />
          </FieldBox>
        </StackRow>
        <StackRow $gap={4}>
          <Glyph w={16} h={16} sw={1}><path d="M0 1.500H16" strokeDasharray="1 1" /><path d="M0 5.500H16" strokeDasharray="4 1" /><path d="M0 10.500H16" /><path d="M0 15.500H16" strokeDasharray="4 2" /></Glyph>
          <FieldBox $width={184}>
            <SampleLine />
            <BareSelect aria-label="Line type"><option>ByLayer</option></BareSelect>
            <Caret />
          </FieldBox>
        </StackRow>
        <StackRow $gap={4}>
          <Glyph w={16} h={16} stroke="none">
            {palette.map((fill, i) => (
              <rect key={fill} x={(i % 3) * 6} y={Math.floor(i / 3) * 6} width="4" height="4" fill={fill} />
            ))}
          </Glyph>
          <FieldBox $width={184} $inset={4}>
            <Swatch />
            <BareSelect aria-label="Colour"><option>ByLayer</option></BareSelect>
            <Caret />
          </FieldBox>
        </StackRow>
      </Stack>
    </PanelBody>
    <Footer launcher>Properties</Footer>
  </Panel>
);

const GroupsPanel = () => (
  <Panel $width={70}>
    <PanelBody>
      <BigTool width={46} lines={["Group"]} icon={<Glyph w={26} h={28} vw={13.500} vh={13} sw={0.700}><GroupShape /></Glyph>} />
      <Stack>
        <StackRow><IconTool label="Ungroup"><Glyph w={16} h={16}><GroupShape /><path d="M8 9L14 15M14 9L8 15" stroke="#e0562a" /></Glyph></IconTool></StackRow>
        <StackRow><IconTool label="Group edit"><Glyph w={16} h={16}><GroupShape /><path d="M8 15L14 9" stroke={Colours.orange} strokeWidth="2" /></Glyph></IconTool></StackRow>
        <StackRow><IconTool label="Group selection"><Glyph w={16} h={16}><GroupShape /><path d="M8 9L15 10.500L13 12L15 14.500L13.500 15.500L11.500 13.500L10 15Z" fill={Colours.blue} stroke="none" /></Glyph></IconTool></StackRow>
      </Stack>
    </PanelBody>
    <Footer>Groups</Footer>
  </Panel>
);

const UtilitiesPanel = () => (
  <Panel $width={111}>
    <PanelBody>
      <BigTool
        width={54}
        caret
        lines={["Measure"]}
        icon={
          <Glyph w={28} h={30}>
            <path d="M1 1V17M27 1V17M1 20H27V29H1ZM5 20V24M9 20V25M13 20V24M17 20V25M21 20V24" />
            <path d="M4 9H24" stroke={Colours.blue} strokeWidth="1.500" />
            <path d="M3 9L8 6V12ZM25 9L20 6V12Z" fill={Colours.blue} stroke="none" />
          </Glyph>
        }
      />
      <Stack>
        <StackRow $gap={10}>
          <IconTool label="Coordinates"><Glyph w={14} h={14}><path d="M2 1V12H12M2 12L9 4M0.500 3L2 1L3.500 3M5.500 4H9V7.500" /></Glyph></IconTool>
          <IconTool label="Bring to front" caret><Glyph w={14} h={14}><path d="M1 8V1H9" /><path d="M3.500 10V3.500H10" stroke={Colours.blue} strokeWidth="2.200" /><path d="M6 6H13V13H6Z" fill="#8f959e" /></Glyph></IconTool>
        </StackRow>
        <StackRow $gap={10}>
          <IconTool label="Calculator"><Glyph w={14} h={14}><path d="M1 1H13V13H1ZM1 5H13M1 9H13M5 5V13M9 5V13M2 3H12" /></Glyph></IconTool>
          <IconTool label="Send to back" caret><Glyph w={14} h={14}><path d="M1 5V1H8V3" /><path d="M4 9V4H10V7" stroke={Colours.blue} strokeWidth="2" /><path d="M7 8H13V12H7Z" /></Glyph></IconTool>
        </StackRow>
        <StackRow $gap={10}>
          <IconTool label="Distance"><Glyph w={14} h={14}><path d="M3 1.500H11M1.500 3V11" strokeDasharray="2 1" /><Dot x={1.500} y={1.500} /><Dot x={12} y={1.500} /><Dot x={1.500} y={12.500} /></Glyph></IconTool>
          <IconTool label="Quick select" caret><Glyph w={14} h={14}><path d="M8 1.500H1.500V11.500H7M11.500 6V8" /><path d="M11 0V5M8.500 2.500H13.500" stroke={Colours.orange} /><path d="M7 7L13 9L11.500 10L13.500 12.500L12 13.500L10 11.500L9 13Z" fill={Colours.blue} stroke="none" /></Glyph></IconTool>
        </StackRow>
      </Stack>
    </PanelBody>
    <Footer caret={false}>Utilities</Footer>
  </Panel>
);

const ClipboardPanel = () => (
  <Panel $width={71}>
    <PanelBody>
      <BigTool
        width={46}
        caret
        lines={["Paste"]}
        icon={
          <Glyph w={28} h={30}>
            <path d="M10 27H1V4H7M16 4H20V8M7 2H16V6H7Z" />
            <path d="M11 8H23L28 13V29H11Z" fill={Colours.blue} stroke="none" />
            <path d="M23 8V13H28" stroke={Colours.panel} strokeWidth="1" />
          </Glyph>
        }
      />
      <Stack $raised>
        <StackRow><IconTool label="Copy with base point"><Glyph w={16} h={16}><path d="M6 14H1V2H4M10 2H13L15 5V14H9M4 1H10V4H4Z" /><path d="M5 12C5 8 7 7.500 9 7.500M8 5L11 7.500L8 10" stroke={Colours.blue} /></Glyph></IconTool></StackRow>
        <StackRow><IconTool label="Cut"><Glyph w={16} h={16}><path d="M4 1L11 11M12 1L5 11" /><circle cx="3.500" cy="12.500" r="2" stroke={Colours.blue} /><circle cx="12.500" cy="12.500" r="2" stroke={Colours.blue} /></Glyph></IconTool></StackRow>
        <StackRow><IconTool label="Copy clip"><Glyph w={16} h={16}><path d="M1 1H10V4H5V12H1Z" fill="#e4e6ea" stroke="none" /><path d="M6 5H11.500L14.500 8V15H6Z" stroke={Colours.blue} /></Glyph></IconTool></StackRow>
      </Stack>
    </PanelBody>
    <Footer caret={false}>Clipboard</Footer>
  </Panel>
);

const CanvasArea = () => (
  <Canvas>
    <Drawing>
      <defs>
        <pattern id="minor" x="25" y="41" width="66" height="66" patternUnits="userSpaceOnUse">
          <path d="M0 0.500H66M0.500 0V66" stroke="#252b36" />
        </pattern>
        <pattern id="major" x="25" y="41" width="330" height="330" patternUnits="userSpaceOnUse">
          <path d="M0 0.500H330M0.500 0V330" stroke="#303646" />
        </pattern>
      </defs>
      <rect width="100%" height="100%" fill="url(#minor)" />
      <rect width="100%" height="100%" fill="url(#major)" />
      <g transform="translate(-4 -239)" fill="none" stroke="#dcdcdc">
        <path d="M461 411L254 759" strokeWidth="1.300" />
        <path d="M253.500 752V766M247 759H261" stroke="#b9b9b9" strokeWidth="2" />
        <path d="M468 411H601" stroke="#4f7fdc" strokeWidth="2" />
        <g fill="#6c9bf2" stroke="none" fontSize="28">
          <text x="460" y="407">X=1384.0</text>
          <text x="462" y="436">Y=877.6</text>
        </g>
        <path d="M457 406H467V416H457Z" fill="#a90000" stroke="none" />
        <path d="M461 411L647 555" stroke="#8c8c8c" />
        <path d="M603 555H786M647 510V600" stroke="#a2a2a2" strokeWidth="2" />
        <g fill="#dedede" stroke="none" fontSize="28">
          <text x="646" y="551">X=1384.0</text>
          <text x="647" y="580">Y=877.6</text>
        </g>
        <path d="M30.500 851V923.500H103M24.500 917.500H36.500V929.500H24.500Z" strokeWidth="1.300" />
        <g fill="#dedede" stroke="none" fontSize="24">
          <text x="30" y="842">Y</text>
          <text x="112" y="924">X</text>
        </g>
        <g fill="#6f7175" stroke="none">
          <path d="M1702 278H1742L1749 292H1695Z" />
          <path d="M1699 279L1691 292H1686L1696 280Z" />
          <path d="M1745 279L1753 292H1758L1748 280Z" />
        </g>
        <text x="1711" y="290" fill="#e8e8e8" stroke="none" fontSize="28">N</text>
      </g>
    </Drawing>
    <DynamicPrompt>
      <PromptBox htmlFor="stretch">
        Specify stretch point or
        <Glyph w={11} h={11} stroke="#24282e" sw={1}>
          <path d="M0.500 0.500H10.500V10.500H0.500Z" fill="#9fa4ab" />
          <path d="M5.500 2V7M3.500 5L5.500 7L7.500 5M2 9H9" />
        </Glyph>
      </PromptBox>
      <PromptInput id="stretch" defaultValue="35.4742" />
      <PromptAngle>&lt; 322°</PromptAngle>
    </DynamicPrompt>
  </Canvas>
);

const CommandLine = () => (
  <CommandArea>
    <CommandHandle>
      <Glyph w={13} h={4} sw={1}><path d="M0 0.500H13M0 3.500H13" strokeDasharray="1 1" /></Glyph>
      <IconTool label="Close command line"><Close size={12} /></IconTool>
      <IconTool label="Command options">
        <Glyph w={12} h={12}><path d="M1 8L7 1.500L9.500 4L3.500 10H1ZM1 11H5M8 10H12" /></Glyph>
      </IconTool>
    </CommandHandle>
    <CommandBody>
      <CommandHistory>
        <HistoryLines>{"Command:\nCommand:\n** STRETCH **"}</HistoryLines>
        <ScrollTrack><ScrollThumb /></ScrollTrack>
      </CommandHistory>
      <CommandPrompt>
        Specify stretch point or [Base point/Copy/Undo/eXit]:
        <CommandInput />
        <HorizontalTrack><ScrollThumb $wide /></HorizontalTrack>
      </CommandPrompt>
    </CommandBody>
  </CommandArea>
);

const Status = () => (
  <StatusBar>
    <Row>
      <Row $gap={11}>
        <IconTool label="Layouts"><Burger /></IconTool>
        <LayoutTab type="button" $active>Model</LayoutTab>
      </Row>
      <LayoutTab type="button">Layout1</LayoutTab>
      <Divider />
      <LayoutTab type="button">Layout2</LayoutTab>
      <Row $gap={12}>
        <Divider />
        <IconTool label="New layout"><Plus /></IconTool>
      </Row>
    </Row>
    <StatusRight>
      <span>1443.5809, 908.4216, 0.0000</span>
      <Toggles>
        {toggles.map(([name, on, icon]) => (
          <Toggle key={name} type="button" aria-label={name} title={name} $on={on}>
            <Glyph w={14} h={14}>{icon}</Glyph>
          </Toggle>
        ))}
      </Toggles>
      <PlainButton type="button" $gap={4}>
        1:1
        <Caret />
      </PlainButton>
      <StatusGroup>
        <Toggle type="button" aria-label="Annotation visibility"><Glyph w={14} h={14}><path d={annotative} fill="#d9dce1" stroke="none" /><Bulb color={Colours.orange} x={8} y={0} /></Glyph></Toggle>
        <Toggle type="button" aria-label="Auto scale"><Glyph w={14} h={14}><path d={annotative} fill="#d9dce1" stroke="none" /><path d="M12 0L9 5H11L9 9L14 4H12Z" fill={Colours.blue} stroke="none" /></Glyph></Toggle>
        <Toggle type="button" aria-label="Quick properties"><Glyph w={14} h={14}><path d="M1 1H13V13H1Z" fill="#dfe2e7" stroke="none" /><path d="M3 3.500H4.500M6 3.500H11.500M3 6H4.500M6 6H11.500M3 8.500H4.500M6 8.500H11.500M3 11H4.500M6 11H11.500" stroke={Colours.chrome} /></Glyph></Toggle>
      </StatusGroup>
      <StatusGroup $space={42} $gap={4}>
        <IconTool label="Settings"><Glyph w={14} h={14}><circle cx="7" cy="7" r="3.700" strokeWidth="2.600" /><path d="M7 0V3M7 11V14M1 3.500L3.500 5M10.500 9L13 10.500M1 10.500L3.500 9M10.500 5L13 3.500" strokeWidth="2" /></Glyph></IconTool>
        <IconTool label="Lock UI"><Glyph w={14} h={14}><path d="M0 6H9V13H0Z" fill={Colours.blue} stroke="none" /><path d="M7.500 6V3C7.500 0.500 12.500 0.500 12.500 3V6" stroke={Colours.blue} strokeWidth="1.800" /></Glyph></IconTool>
        <IconTool label="Isolate objects"><Glyph w={14} h={14}><g transform="scale(1.400)"><Bulb color={Colours.blue} x={2} y={0.500} /></g></Glyph></IconTool>
        <IconTool label="Performance"><Glyph w={14} h={14}><path d="M3 12A6 6 0 1 1 11 12M7 8L11 3M4 11H10" stroke="#2b86dc" /></Glyph></IconTool>
        <IconTool label="Full screen"><Glyph w={14} h={14}><path d="M1 1H13V13H1ZM4 10L10 4M3.500 8V10.500H6M8 3.500H10.500V6" strokeWidth="1.100" /></Glyph></IconTool>
        <span>GstarCAD</span>
      </StatusGroup>
    </StatusRight>
  </StatusBar>
);

const RadioOption = ({ name, text, checked }) => (
  <Option>
    <Radio name={name} defaultChecked={checked} />
    {text}
  </Option>
);

const CheckOption = ({ text, large }) => (
  <Option $large={large}>
    <CheckBox $large={large} defaultChecked />
    {text}
  </Option>
);

const CoordinateDialog = () => (
  <Dialog onSubmit={e => e.preventDefault()}>
    <DialogTitle>
      <LogoTile><Logo size={26} /></LogoTile>
      Coordinate Point
      <CloseButton type="button" aria-label="Close dialog"><Close size={19} sw={1} color="#8a8a8a" /></CloseButton>
    </DialogTitle>
    <DialogBody>
      <FieldGrid>
        <FieldLabel htmlFor="unit">Unit:</FieldLabel>
        <ComboBox>
          <BareSelect id="unit"><option>Millimeter</option></BareSelect>
          <Chevron />
        </ComboBox>
        <FieldLabel htmlFor="precision" $indent>Precision:</FieldLabel>
        <ComboBox>
          <BareSelect id="precision"><option>0.0</option></BareSelect>
          <Chevron />
        </ComboBox>
      </FieldGrid>
      <OptionGrid>
        <GroupBox $width={238} $height={297} $top={42} $inset={5} $gap={31}>
          <Preview>
            <span>X=1234.0</span>
            <PreviewRule />
            <span>Y=1234.0</span>
          </Preview>
          <CheckOption text="Label line dragging" />
          <CheckOption text="Cross sign point" />
        </GroupBox>
        <OptionColumn>
          <OptionRow>
            <GroupBox $width={101} $height={134}>
              <RadioOption name="axes" text="X/Y" checked />
              <RadioOption name="axes" text="A/B" />
            </GroupBox>
            <GroupBox $width={165} $height={134}>
              <RadioOption name="direction" text="XA Up" checked />
              <RadioOption name="direction" text="XA Down" />
            </GroupBox>
            <GroupBox $width={254} $height={134}>
              <RadioOption name="system" text="Earth Coordinate" />
              <RadioOption name="system" text="Common Coordinate" checked />
            </GroupBox>
          </OptionRow>
          <OptionRow>
            <GroupBox $width={273} $height={151} $top={38} $gap={31}>
              <RadioOption name="fixed" text="Fixed value by WCS" />
              <RadioOption name="fixed" text="Fixed value by UCS" checked />
            </GroupBox>
            <SwitchCallout>
              <CheckOption text="Group" large />
              <CheckOption text="Auto Switch" large />
            </SwitchCallout>
          </OptionRow>
        </OptionColumn>
      </OptionGrid>
      <DialogActions>
        <DialogButton type="submit">OK</DialogButton>
        <DialogButton type="button">Cancel</DialogButton>
      </DialogActions>
    </DialogBody>
    <ScaleCallout>
      <ScaleLabel htmlFor="scale">Scale:</ScaleLabel>
      <ScaleInput id="scale" defaultValue="1.0" />
      <ScaleLabel htmlFor="textHeight" $indent>Text Height:</ScaleLabel>
      <ScaleInput id="textHeight" defaultValue="3.0" />
    </ScaleCallout>
  </Dialog>
);

const App = () => (
  <Page>
    <GlobalStyle />
    <AppWindow>
      <Header />
      <Ribbon>
        <DrawPanel />
        <ModifyPanel />
        <AnnotationPanel />
        <LayerPanel />
        <BlockPanel />
        <PropertiesPanel />
        <GroupsPanel />
        <UtilitiesPanel />
        <ClipboardPanel />
      </Ribbon>
      <DocTabs>
        <TabIconButton type="button" aria-label="Drawing list"><Burger /></TabIconButton>
        <DocTab>
          Drawing1*
          <PlainButton type="button" aria-label="Close tab"><Close size={10} sw={2} /></PlainButton>
        </DocTab>
        <TabIconButton type="button" aria-label="New drawing"><Plus /></TabIconButton>
      </DocTabs>
      <CanvasArea />
      <CommandLine />
      <Status />
    </AppWindow>
    <CoordinateDialog />
  </Page>
);

export default App;
